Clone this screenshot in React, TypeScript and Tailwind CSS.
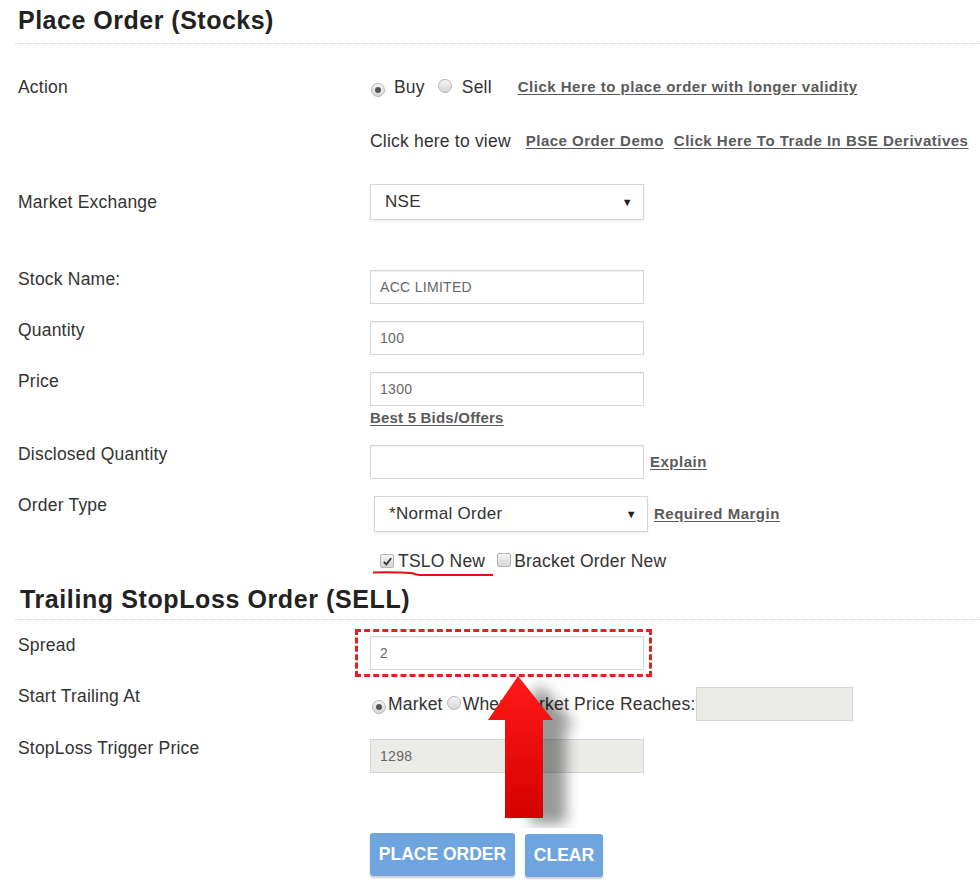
import React from "react";

const font = { fontFamily: '"Liberation Sans", Arial, sans-serif' };

function Radio({ checked }: { checked?: boolean }) {
  return (
    <span className="inline-flex h-[14px] w-[14px] shrink-0 items-center justify-center rounded-full border border-[#b5b5b5] bg-gradient-to-b from-[#f6f6f6] to-[#d6d6d6]">
      {checked && <span className="h-[6px] w-[6px] rounded-full bg-[#555]" />}
    </span>
  );
}

function Checkbox({ checked }: { checked?: boolean }) {
  return (
    <span className="inline-flex h-[14px] w-[14px] shrink-0 items-center justify-center rounded-[2px] border border-[#b5b5b5] bg-gradient-to-b from-[#f4f4f4] to-[#d6d6d6]">
      {checked && (
        <svg viewBox="0 0 12 12" className="h-[11px] w-[11px]">
          <path d="M2 6.5 L4.8 9.2 L10 2.5" fill="none" stroke="#333" strokeWidth="2" />
        </svg>
      )}
    </span>
  );
}

function Field({ value, gray, w = "w-[274px]" }: { value?: string; gray?: boolean; w?: string }) {
  return (
    <div
      className={`flex h-[34px] ${w} items-center border border-[#d6d6d6] pl-[9px] text-[14px] tracking-[0.3px] text-[#666] ${
        gray ? "bg-[#ebebe8]" : "bg-white shadow-[inset_0_1px_1px_rgba(0,0,0,0.06)]"
      }`}
    >
      {value}
    </div>
  );
}

function Select({ value }: { value: string }) {
  return (
    <div className="flex h-[36px] w-[274px] items-center justify-between border border-[#d6d6d6] bg-white pl-[14px] pr-[10px] text-[17px] tracking-[0.3px] text-[#333] shadow-[0_1px_2px_rgba(0,0,0,0.08)]">
      <span>{value}</span>
      <span className="text-[11px] text-[#222]">▼</span>
    </div>
  );
}

const labelCls = "w-[352px] shrink-0 text-[17.5px] leading-[18px] tracking-[0.2px] text-[#333]";
const textCls = "text-[17.5px] tracking-[0.2px] text-[#333]";
const linkCls = "text-[15px] font-bold tracking-[0.5px] text-[#5a5a5a] underline underline-offset-2";

export default function App() {
  return (
    <div style={font} className="relative h-[888px] w-[980px] overflow-hidden bg-white">
      <h1 className="h-[40px] pl-[18px] text-[25px] font-bold leading-[40px] tracking-[0.5px] text-[#222]">
        Place Order (Stocks)
      </h1>
      <div className="ml-[15px] mt-[3px] border-b border-dotted border-[#cfcfcf]" />

      <div className="pl-[18px]">
        {/* Action */}
        <div className="mt-[33px] flex h-[20px] items-center">
          <div className={labelCls}>Action</div>
          <div className={`flex items-center ${textCls}`}>
            <span className="ml-[1px]"><Radio checked /></span>
            <span className="ml-[9px]">Buy</span>
            <span className="ml-[13px]"><Radio /></span>
            <span className="ml-[10px]">Sell</span>
            <a className={`${linkCls} ml-[26px]`}>Click Here to place order with longer validity</a>
          </div>
        </div>

        <div className="mt-[34px] flex h-[20px] items-center">
          <div className="w-[352px] shrink-0" />
          <div className={`flex items-center ${textCls}`}>
            <span>Click here to view</span>
            <a className={`${linkCls} ml-[15px]`}>Place Order Demo</a>
            <a className={`${linkCls} ml-[10px]`}>Click Here To Trade In BSE Derivatives</a>
          </div>
        </div>

        {/* Market Exchange */}
        <div className="mt-[33px] flex items-center">
          <div className={labelCls}>Market Exchange</div>
          <Select value="NSE" />
        </div>

        <div className="mt-[50px] flex">
          <div className={labelCls}>Stock Name:</div>
          <Field value="ACC LIMITED" />
        </div>

        <div className="mt-[17px] flex">
          <div className={labelCls}>Quantity</div>
          <Field value="100" />
        </div>

        <div className="mt-[17px] flex">
          <div className={labelCls}>Price</div>
          <div>
            <Field value="1300" />
            <a className="mt-[3px] block text-[15px] font-bold leading-[18px] tracking-[0.2px] text-[#5a5a5a] underline underline-offset-2">
              Best 5 Bids/Offers
            </a>
          </div>
        </div>

        <div className="mt-[18px] flex">
          <div className={labelCls}>Disclosed Quantity</div>
          <div className="flex items-center">
            <Field />
            <a className={`${linkCls} ml-[6px]`}>Explain</a>
          </div>
        </div>

        <div className="mt-[17px] flex">
          <div className={labelCls}>Order Type</div>
          <div className="ml-[4px] flex items-center">
            <Select value="*Normal Order" />
            <a className={`${linkCls} ml-[6px]`}>Required Margin</a>
          </div>
        </div>

        {/* TSLO / Bracket */}
        <div className="mt-[19px] flex h-[20px] items-center">
          <div className="w-[352px] shrink-0" />
          <div className={`relative ml-[10px] flex items-center ${textCls}`}>
            <Checkbox checked />
            <span className="ml-[4px]">TSLO New</span>
            <span className="ml-[12px]"><Checkbox /></span>
            <span className="ml-[3px]">Bracket Order New</span>
            <svg className="absolute -left-[8px] top-[23px]" width="124" height="6" viewBox="0 0 124 6">
              <path d="M1 1.5 Q20 1 40 2 Q44 4 48 4 L121 4" fill="none" stroke="#e01010" strokeWidth="2" />
            </svg>
          </div>
        </div>
      </div>

      <h2 className="mt-[10px] h-[36px] pl-[20px] text-[25px] font-bold leading-[36px] tracking-[0.6px] text-[#222]">
        Trailing StopLoss Order (SELL)
      </h2>
      <div className="ml-[15px] mt-[2px] border-b border-dotted border-[#cfcfcf]" />

      <div className="pl-[18px]">
        <div className="mt-[16px] flex">
          <div className={labelCls}>Spread</div>
          <div className="relative">
            <Field value="2" />
            <div className="absolute -left-[15px] -top-[7px] h-[48px] w-[297px] border-[3px] border-dashed border-[#e32020]" />
          </div>
        </div>

        <div className="mt-[17px] flex">
          <div className={labelCls}>Start Trailing At</div>
          <div className={`flex h-[34px] items-center ${textCls}`}>
            <span className="ml-[2px]"><Radio checked /></span>
            <span className="ml-[2px]">Market</span>
            <span className="ml-[4px]"><Radio /></span>
            <span className="ml-[2px]">When Market Price Reaches:</span>
            <div className="ml-[1px]">
              <Field gray w="w-[157px]" />
            </div>
          </div>
        </div>

        <div className="mt-[18px] flex">
          <div className={labelCls}>StopLoss Trigger Price</div>
          <Field value="1298" gray />
        </div>

        <div className="mt-[60px] flex">
          <div className="w-[352px] shrink-0" />
          <div className="flex items-start gap-[10px]">
            <button className="h-[43px] w-[145px] rounded-[3px] bg-[#6fa5de] text-[17.5px] font-bold text-white shadow-[0_2px_2px_rgba(0,0,0,0.2)]">
              PLACE ORDER
            </button>
            <button className="mt-[1px] h-[43px] w-[78px] rounded-[3px] bg-[#6fa5de] text-[17.5px] font-bold text-white shadow-[0_2px_2px_rgba(0,0,0,0.2)]">
              CLEAR
            </button>
          </div>
        </div>
      </div>

      {/* annotation arrow */}
      <svg className="pointer-events-none absolute left-[480px] top-[672px]" width="120" height="156" viewBox="0 0 120 156">
        <defs>
          <filter id="sh" x="-50%" y="-20%" width="200%" height="140%">
            <feGaussianBlur stdDeviation="7" />
          </filter>
          <linearGradient id="ar" x1="0" y1="0" x2="0" y2="1">
            <stop offset="0" stopColor="#ff1a1a" />
            <stop offset="1" stopColor="#d40000" />
          </linearGradient>
        </defs>
        <path d="M46 10 L82 52 L72 52 L72 150 L36 150 L36 52 L18 52 Z" fill="#000" opacity="0.4" filter="url(#sh)" transform="translate(14 2)" />
        <path d="M38 4 L73 48 L63 48 L63 146 L25 146 L25 48 L8 48 Z" fill="url(#ar)" />
      </svg>
    </div>
  );
}
